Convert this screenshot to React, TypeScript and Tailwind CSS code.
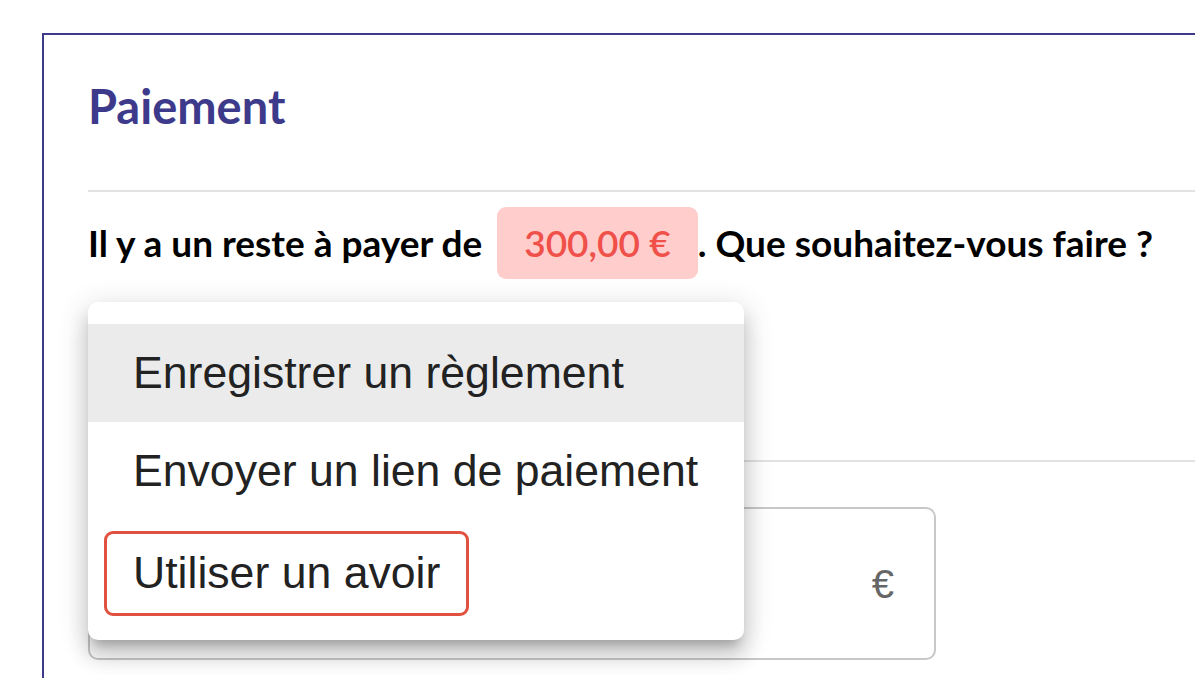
// Paiement — carte avec menu déroulant ouvert au-dessus du formulaire.

const items = [
  { label: 'Enregistrer un règlement', hover: true },
  { label: 'Envoyer un lien de paiement' },
  { label: 'Utiliser un avoir', outlined: true },
]

function PaymentMenu() {
  return (
    <div className="absolute left-[88px] top-[302px] w-[656px] rounded-[10px] bg-white py-[22px] shadow-[0_10px_10px_-6px_rgba(0,0,0,0.2),0_16px_20px_2px_rgba(0,0,0,0.14),0_6px_28px_4px_rgba(0,0,0,0.12)]">
      {items.map((it) =>
        it.outlined ? (
          <div key={it.label} className="h-[98px] px-[16px] pt-[11px]">
            <div className="inline-flex h-[85px] items-center rounded-[9px] border-[3px] border-[#e0513f] pl-[26px] pr-[26px] text-[44.6px] leading-none text-[#222] font-['Liberation_Sans',Arial,sans-serif]">
              {it.label}
            </div>
          </div>
        ) : (
          <div
            key={it.label}
            className={`h-[98px] pl-[45px] text-[44.6px] leading-[98px] text-[#222] font-['Liberation_Sans',Arial,sans-serif] ${
              it.hover ? 'bg-[#ebebeb]' : ''
            }`}
          >
            {it.label}
          </div>
        )
      )}
    </div>
  )
}

export default function App() {
  return (
    <div className="relative h-[678px] w-[1195px] overflow-hidden bg-white font-['Lato','Noto_Sans',sans-serif]">
      <div className="ml-[42px] mt-[33px] h-[700px] w-[1200px] border-l-2 border-t-2 border-[#3d3a8c] pl-[44px] pt-[45px]">
        <h1 className="text-[47px] font-bold leading-[52px] text-[#3d3a8c]">Paiement</h1>

        <div className="mt-[58px] h-[2px] bg-[#e2e2e2]" />

        <div className="mt-[15px] flex h-[72px] items-center text-[37px] font-bold text-black">
          <span>Il y a un reste à payer de</span>
          <span className="ml-[15px] flex h-[72px] items-center rounded-[9px] bg-[#ffcdcb] px-[27px] font-semibold text-[#f0504a]">
            300,00 €
          </span>
          <span>. Que souhaitez-vous faire ?</span>
        </div>

        {/* champ de sélection caché sous le menu */}
        <div className="h-[181px]" />

        <div className="h-[2px] bg-[#e2e2e2]" />

        <div className="mt-[45px] flex h-[153px] w-[848px] items-center justify-end rounded-[10px] border-2 border-[#c8c8c8] pr-[40px]">
          <span className="text-[40px] text-[#666] font-['Liberation_Sans',Arial,sans-serif]">€</span>
        </div>
      </div>

      <PaymentMenu />
    </div>
  )
}
